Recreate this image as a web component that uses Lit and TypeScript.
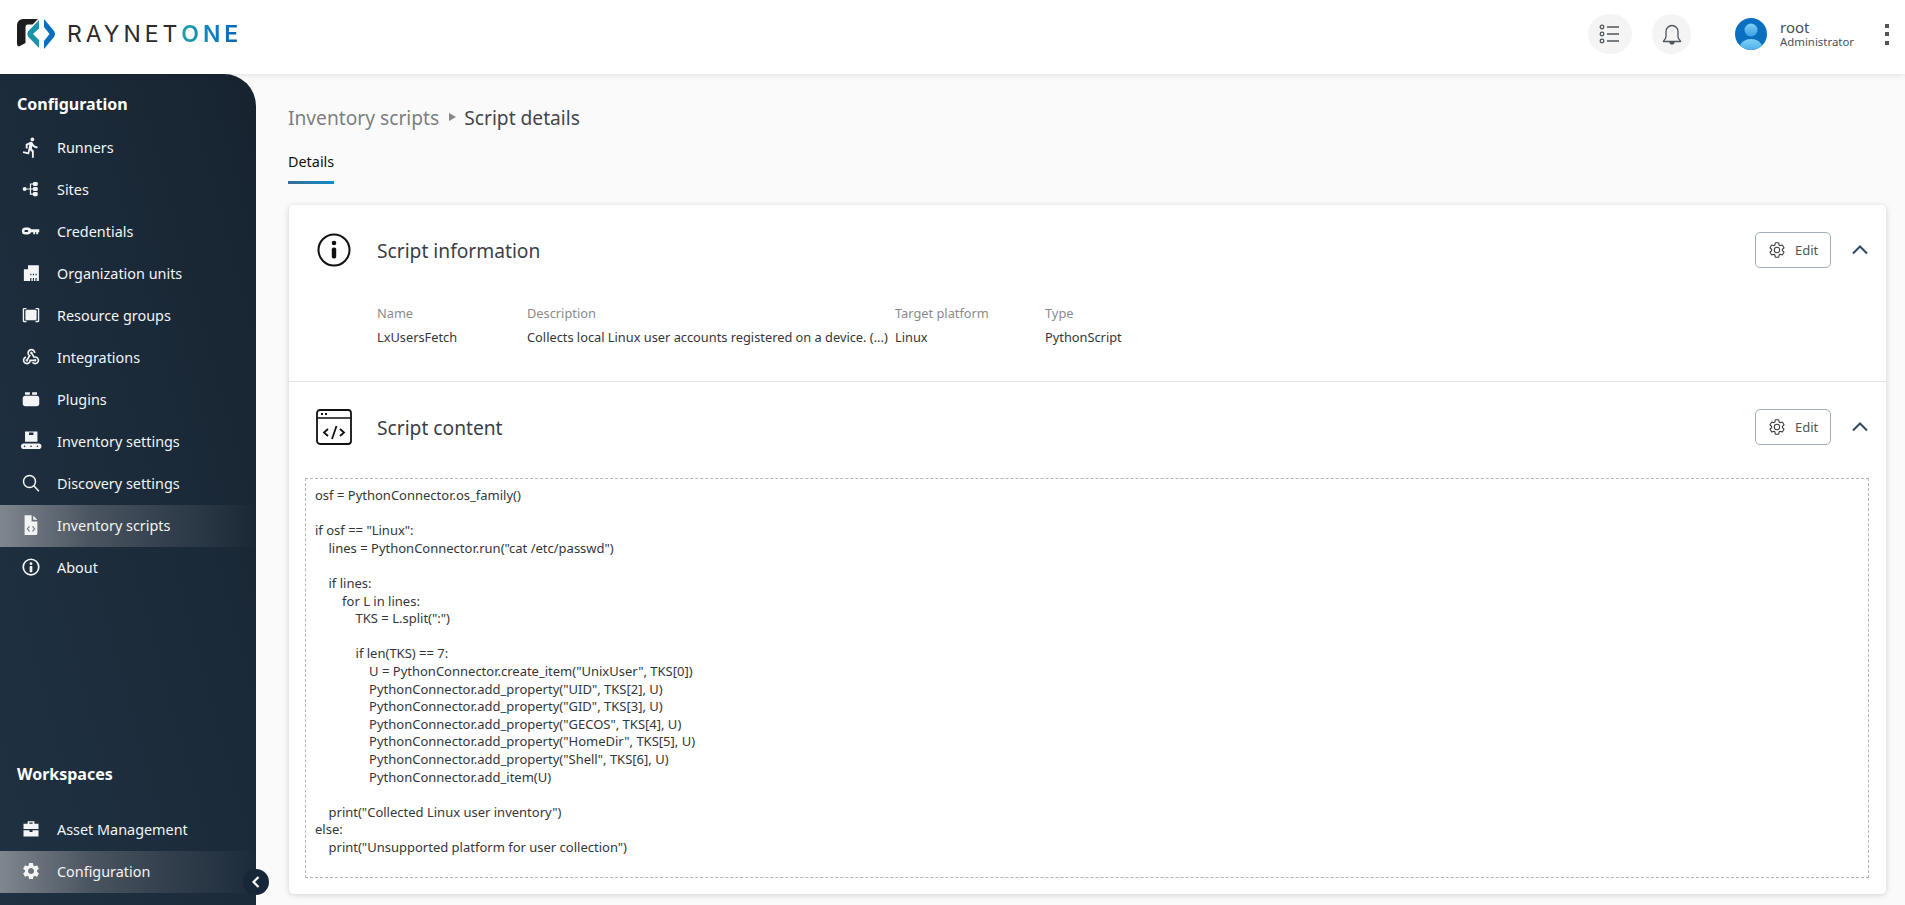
import { LitElement, css, html, svg } from "lit";
import { customElement } from "lit/decorators.js";

const gearPath =
  "M19.14 12.94c.04-.3.06-.61.06-.94 0-.32-.02-.64-.07-.94l2.03-1.58c.18-.14.23-.41.12-.61l-1.92-3.32c-.12-.22-.37-.29-.59-.22l-2.39.96c-.5-.38-1.03-.7-1.62-.94l-.36-2.54c-.04-.24-.24-.41-.48-.41h-3.84c-.24 0-.43.17-.47.41l-.36 2.54c-.59.24-1.13.57-1.62.94l-2.39-.96c-.22-.08-.47 0-.59.22L2.74 8.87c-.12.21-.08.47.12.61l2.03 1.58c-.05.3-.09.63-.09.94s.02.64.07.94l-2.03 1.58c-.18.14-.23.41-.12.61l1.92 3.32c.12.22.37.29.59.22l2.39-.96c.5.38 1.03.7 1.62.94l.36 2.54c.05.24.24.41.48.41h3.84c.24 0 .44-.17.47-.41l.36-2.54c.59-.24 1.13-.56 1.62-.94l2.39.96c.22.08.47 0 .59-.22l1.92-3.32c.12-.22.07-.47-.12-.61l-2.01-1.58zM12 15.6c-1.98 0-3.6-1.62-3.6-3.6s1.62-3.6 3.6-3.6 3.6 1.62 3.6 3.6-1.62 3.6-3.6 3.6z";

const icons: Record<string, unknown> = {
  runner: svg`<path transform="translate(-3 -2.400) scale(1.250)" d="M13.49 5.48c1.1 0 2-.9 2-2s-.9-2-2-2-2 .9-2 2 .9 2 2 2zm-3.6 13.9l1-4.4 2.100 2v6h2v-7.500l-2.100-2 .6-3c1.300 1.500 3.300 2.500 5.500 2.500v-2c-1.900 0-3.500-1-4.300-2.400l-1-1.600c-.4-.6-1-1-1.700-1-.3 0-.5.100-.8.100L6.400 8.300V13h2V9.600l1.800-.7-1.600 8.100-4.900-1-.4 2 7 1.400z"/>`,
  sites: svg`<circle cx="3.500" cy="12" r="2.600"/><path d="M5 11.200h5.500V4.500H15v1.600h-2.900v5.100H15v1.600h-2.900v5.100H15v1.600h-4.500v-6.700H5z"/><rect x="14.500" y="2.500" width="6.500" height="5.500" rx="1.800"/><rect x="14.500" y="9.300" width="6.500" height="5.500" rx="1.800"/><rect x="14.500" y="16.100" width="6.500" height="5.500" rx="1.800"/>`,
  key: svg`<path fill-rule="evenodd" d="M4.500 7.300h3.500a4.700 4.700 0 0 1 4.300 2.200H23v4.300h-1.500v2.500h-2.500v-2.500h-1.500v2.500H15v-2.500h-2.700a4.700 4.700 0 0 1-4.300 2.900H4.500a4.700 4.700 0 0 1 0-9.400zm0 3.400a1.300 1.300 0 0 0 0 2.600h2.500a1.300 1.300 0 0 0 0-2.600z"/>`,
  org: svg`<path fill-rule="evenodd" d="M8 1.500h14.500v21h-3v-4H18v4h-2v-4h-1.500v4h-2v-4H11v4H2.500V7H8zM11 13v2h1.500v-2zm3.500 0v2H16v-2zm3.500 0v2h1.500v-2z"/>`,
  group: svg`<path d="M6 2.500H2.500A1.500 1.500 0 0 0 1 4v16a1.500 1.500 0 0 0 1.500 1.500H6v-1.700H2.800V4.200H6zM18 2.500h3.500A1.500 1.500 0 0 1 23 4v16a1.500 1.500 0 0 1-1.500 1.500H18v-1.700h3.200V4.200H18z"/><rect x="4.500" y="5" width="15" height="14" rx="2"/>`,
  hook: svg`<path transform="translate(-1.200 -1.200) scale(1.100)" d="M10 15h5.880c.27-.31.67-.5 1.120-.5.830 0 1.500.670 1.500 1.500s-.670 1.500-1.500 1.500c-.440 0-.840-.190-1.120-.500H11.900c-.460 2.280-2.480 4-4.900 4-2.760 0-5-2.240-5-5 0-2.420 1.720-4.440 4-4.900v2.060C4.840 13.570 4 14.680 4 16c0 1.650 1.350 3 3 3s3-1.350 3-3v-1zm2.500-11c1.650 0 3 1.350 3 3h2c0-2.760-2.240-5-5-5s-5 2.240-5 5c0 1.430.6 2.710 1.560 3.620l-2.350 3.910C6.030 14.670 5.500 15.270 5.500 16c0 .830.670 1.500 1.500 1.500s1.500-.670 1.500-1.500c0-.160-.020-.310-.070-.450l3.380-5.630C10.420 9.660 9.500 8.430 9.500 7c0-1.650 1.350-3 3-3zm4.500 9c-.640 0-1.230.190-1.730.520l-3.050-5.070C11.530 8.310 11 7.710 11 7c0-.830.670-1.500 1.500-1.500S14 6.170 14 7c0 .150-.020.290-.060.430l2.190 3.640c.280-.050.570-.070.870-.070 2.760 0 5 2.240 5 5s-2.240 5-5 5c-1.850 0-3.470-1.010-4.330-2.500h2.670c.480.310 1.050.500 1.660.500 1.650 0 3-1.350 3-3s-1.350-3-3-3z"/>`,
  plugin: svg`<path d="M4 3h6.500v3.200H4zM13.500 3H20v3.200h-6.500z"/><rect x="1" y="7.500" width="22" height="14" rx="3.500"/>`,
  belt: svg`<path transform="translate(-.800 -.800) scale(1.070)" fill-rule="evenodd" d="M4.500 0h15.500v13H4.500zM9.500 1.500v3h5.500v-3zM3 15h18.500a3.200 3.200 0 0 1 0 7H3a3.200 3.200 0 0 1 0-7zM4 17.600a1 1 0 1 0 0 2 1 1 0 0 0 0-2zm8 0a1 1 0 1 0 0 2 1 1 0 0 0 0-2zm8 0a1 1 0 1 0 0 2 1 1 0 0 0 0-2z"/>`,
  search: svg`<g fill="none" stroke="currentColor" stroke-width="2"><circle cx="10" cy="10" r="8"/><path d="M15.800 15.800L22.500 23"/></g>`,
  filecode: svg`<path transform="translate(-1.500 -1) scale(1.100)" fill-rule="evenodd" d="M4.500 0h8.500v7.500h7V22a2 2 0 0 1-2 2H4.500zM15 .5L20 5.500h-5zM10 13l-3 3.500 3 3.500 1-.8-2.300-2.700 2.300-2.700zM14.500 13l3 3.500-3 3.500-1-.8 2.300-2.700-2.300-2.700z"/>`,
  info: svg`<path fill-rule="evenodd" d="M12 0.500a11.500 11.500 0 1 1 0 23 11.500 11.500 0 0 1 0-23zm0 2.300a9.200 9.200 0 1 0 0 18.400 9.200 9.200 0 0 0 0-18.400z"/><circle cx="12" cy="7.500" r="1.900"/><rect x="10.200" y="10.500" width="3.600" height="8.500" rx="1"/>`,
  case: svg`<path fill-rule="evenodd" d="M7.500 1.500h9v3.500H22v7H2V5h5.500zM9.800 3.300V5h4.400V3.300zM2 13.500h8V16h4v-2.500h8V22H2z"/>`,
  gear: svg`<path transform="translate(-1.400 -1.400) scale(1.120)" d="${gearPath}"/>`,
};

const configItems = [
  ["runner", "Runners"],
  ["sites", "Sites"],
  ["key", "Credentials"],
  ["org", "Organization units"],
  ["group", "Resource groups"],
  ["hook", "Integrations"],
  ["plugin", "Plugins"],
  ["belt", "Inventory settings"],
  ["search", "Discovery settings"],
  ["filecode", "Inventory scripts"],
  ["info", "About"],
];

const scriptText = `osf = PythonConnector.os_family()

if osf == "Linux":
    lines = PythonConnector.run("cat /etc/passwd")

    if lines:
        for L in lines:
            TKS = L.split(":")

            if len(TKS) == 7:
                U = PythonConnector.create_item("UnixUser", TKS[0])
                PythonConnector.add_property("UID", TKS[2], U)
                PythonConnector.add_property("GID", TKS[3], U)
                PythonConnector.add_property("GECOS", TKS[4], U)
                PythonConnector.add_property("HomeDir", TKS[5], U)
                PythonConnector.add_property("Shell", TKS[6], U)
                PythonConnector.add_item(U)

    print("Collected Linux user inventory")
else:
    print("Unsupported platform for user collection")`;

@customElement("app-root")
export class AppRoot extends LitElement {
  static styles = css`
    :host {
      display: flex;
      flex-direction: column;
      height: 905px;
      overflow: hidden;
      background: #fafafa;
      font-family: "Noto Sans", sans-serif;
      color: #32363b;
    }

    /* top bar */
    .topbar {
      flex: none;
      height: 74px;
      box-sizing: border-box;
      padding-bottom: 6px;
      background: #fff;
      display: flex;
      align-items: center;
      box-shadow: 0 1px 6px rgba(0, 0, 0, 0.1);
      position: relative;
      z-index: 2;
    }
    .logo {
      display: flex;
      align-items: center;
      margin-left: 17px;
    }
    .logo svg {
      width: 39px;
      height: 30px;
    }
    .logo-text {
      margin-left: 11px;
      font-family: "Inter", sans-serif;
      font-size: 23px;
      line-height: 30px;
      letter-spacing: 3.950px;
      color: #2b2b2b;
      white-space: nowrap;
    }
    .logo-text b {
      font-weight: 600;
      background: linear-gradient(90deg, #1f9fa8 0%, #0a7cc4 60%, #0c5ea8 100%);
      -webkit-background-clip: text;
      background-clip: text;
      color: transparent;
    }
    .top-actions {
      margin-left: auto;
      display: flex;
      align-items: center;
    }
    .round {
      width: 44px;
      height: 40px;
      border-radius: 50%;
      background: #f4f4f4;
      display: flex;
      align-items: center;
      justify-content: center;
      margin-right: 20px;
      color: #50555a;
    }
    .round.bell {
      width: 39px;
      margin-right: 44px;
    }
    .round svg {
      width: 24px;
      height: 24px;
      fill: none;
      stroke: currentColor;
    }
    .avatar {
      width: 32px;
      height: 32px;
    }
    .user {
      margin-left: 13px;
      display: flex;
      flex-direction: column;
      color: #4a5058;
      width: 105px;
    }
    .user .name {
      font-size: 15px;
      line-height: 15px;
      padding-top: 1px;
    }
    .user .role {
      font-size: 11.400px;
      line-height: 14px;
    }
    .dots {
      width: 5px;
      margin-right: 15px;
      display: flex;
      flex-direction: column;
      gap: 4.500px;
    }
    .dots i {
      display: block;
      width: 4px;
      height: 4px;
      background: #50555f;
    }

    /* shell */
    .shell {
      flex: 1;
      display: flex;
      min-height: 0;
    }
    .sidebar {
      flex: none;
      width: 256px;
      position: relative;
      box-sizing: border-box;
      padding-top: 19px;
      display: flex;
      flex-direction: column;
      background: linear-gradient(75deg, #1f3142 0%, #1b2a39 60%, #17232f 100%);
      border-top-right-radius: 32px;
      color: #fff;
    }
    .heading {
      font-size: 16px;
      font-weight: 700;
      line-height: 22px;
      padding-left: 17px;
      margin-bottom: 12px;
    }
    .heading.bottom {
      margin-top: auto;
      margin-bottom: 24px;
    }
    .item {
      height: 42px;
      box-sizing: border-box;
      padding-bottom: 2px;
      display: flex;
      align-items: center;
      font-size: 14.400px;
      color: #f2f4f5;
    }
    .item.active {
      background: linear-gradient(90deg, #7f878e 0%, #4b5561 35%, #333f4d 65%, rgba(40, 52, 65, 0) 100%);
    }
    .item svg {
      width: 18px;
      height: 18px;
      margin-left: 22px;
      margin-right: 17px;
      fill: currentColor;
      flex: none;
      overflow: visible;
    }
    .side-bottom {
      margin-bottom: 12px;
    }
    .collapse {
      position: absolute;
      right: -13px;
      bottom: 10px;
      width: 26px;
      height: 26px;
      border-radius: 50%;
      background: #16273a;
      display: flex;
      align-items: center;
      justify-content: center;
    }
    .collapse svg {
      width: 14px;
      height: 14px;
      fill: none;
      stroke: #fff;
      stroke-width: 2.200;
    }

    /* main */
    .main {
      flex: 1;
      min-width: 0;
      padding: 0 19px 0 32px;
      display: flex;
      flex-direction: column;
    }
    .crumbs {
      margin-top: 28px;
      height: 30px;
      display: flex;
      align-items: center;
      font-size: 19.200px;
      color: #7d7f82;
    }
    .crumbs .sep {
      width: 0;
      height: 0;
      margin: 0 8px 0 10px;
      border-left: 7px solid #85878a;
      border-top: 4px solid transparent;
      border-bottom: 4px solid transparent;
    }
    .crumbs .current {
      color: #43474c;
    }
    .tabs {
      margin-top: 20px;
      display: flex;
    }
    .tab {
      font-size: 14.400px;
      line-height: 19px;
      color: #111;
      padding-bottom: 10px;
      border-bottom: 3px solid;
      border-image: linear-gradient(90deg, #3a6a96, #0c8fc6) 1;
    }
    .card {
      margin: 21px 0 0 1px;
      height: 689px;
      flex: none;
      background: #fff;
      border-radius: 5px;
      box-shadow: 0 1px 6px rgba(0, 0, 0, 0.16);
    }
    .section + .section {
      border-top: 1px solid #e3e5e6;
    }
    .section-info {
      height: 176px;
    }
    .section-head {
      height: 90px;
      display: flex;
      align-items: center;
      padding-right: 18px;
    }
    .head-icon {
      width: 36px;
      height: 36px;
      margin-left: 27px;
      margin-right: 25px;
      flex: none;
    }
    .section-head h2 {
      margin: 0;
      font-size: 19.200px;
      font-weight: 400;
      color: #3b4046;
    }
    .edit {
      margin-left: auto;
      width: 76px;
      height: 36px;
      box-sizing: border-box;
      border: 1px solid #9fb0b8;
      border-radius: 5px;
      background: #fff;
      display: flex;
      align-items: center;
      font-family: inherit;
      font-size: 13px;
      color: #50555a;
      padding: 0 0 0 12px;
    }
    .edit svg {
      width: 18px;
      height: 18px;
      margin-right: 9px;
      fill: none;
      stroke: #33383d;
      stroke-width: 1.400;
    }
    .chev {
      width: 16px;
      height: 10px;
      margin-left: 21px;
      fill: none;
      stroke: #2f4a66;
      stroke-width: 2;
    }
    .fields {
      display: grid;
      grid-template-columns: 150px 368px 150px 1fr;
      padding-left: 88px;
      margin-top: 9px;
      font-size: 12.800px;
      row-gap: 6px;
    }
    .fields .label {
      color: #888b8e;
      line-height: 18px;
    }
    .fields .value {
      color: #33373b;
      line-height: 18px;
    }
    .code {
      margin: 6px 17px 0 16px;
      height: 400px;
      box-sizing: border-box;
      border: 1px dashed #b4b7b9;
      padding: 8px 9px;
      font-size: 13px;
      line-height: 17.600px;
      color: #33373b;
      white-space: pre;
      overflow: hidden;
    }
  `;

  private renderItem(icon: string, label: string, active = false) {
    return html`<div class="item ${active ? "active" : ""}">
      <svg viewBox="0 0 24 24">${icons[icon]}</svg>${label}
    </div>`;
  }

  private renderEdit() {
    return html`<button class="edit">
        <svg viewBox="0 0 24 24"><path d=${gearPath} /></svg>
        Edit
      </button>
      <svg class="chev" viewBox="0 0 16 10"><path d="M1 8.500L8 1.500l7 7" /></svg>`;
  }

  render() {
    return html`
      <header class="topbar">
        <div class="logo">
          <svg viewBox="0 0 39 30">
            <path d="M0 6a6 6 0 0 1 6-6H21L15.500 5.500H11a2.500 2.500 0 0 0-2.500 2.500V24L2 27.500Q0 27 0 25z" fill="#1d1d1d"/>
            <path d="M22 1v8.500L16 15l6 6v8L11 17.500q-1.500-2.500 0-5z" fill="#1b93a8"/>
            <path d="M27 0l10 12q2 3 0 6L27 30v-8l5.500-7L27 8z" fill="#0a6fc0"/>
          </svg>
          <div class="logo-text">RAYNET<b>ONE</b></div>
        </div>
        <div class="top-actions">
          <div class="round">
            <svg viewBox="0 0 24 24" stroke-width="1.300">
              <circle cx="4" cy="5" r="1.800"/><circle cx="4" cy="12" r="1.800"/><circle cx="4" cy="19" r="1.800"/>
              <path d="M9 5h12M9 12h12M9 19h12"/>
            </svg>
          </div>
          <div class="round bell">
            <svg viewBox="0 0 24 24" stroke-width="1.300">
              <path d="M3.500 19.500c0-1.500 2.500-2 2.500-5V9.500a6 6 0 0 1 12 0v5c0 3 2.500 3.500 2.500 5z"/>
              <path d="M10 20.500a2 1.500 0 0 0 4 0z" fill="currentColor"/>
            </svg>
          </div>
          <svg class="avatar" viewBox="0 0 32 32">
            <defs>
              <clipPath id="av"><circle cx="16" cy="16" r="16"/></clipPath>
              <linearGradient id="avg" x1="0" y1="0" x2="0" y2="1">
                <stop offset="0" stop-color="#7fd0f5"/>
                <stop offset="1" stop-color="#3aa0e4"/>
              </linearGradient>
            </defs>
            <g clip-path="url(#av)">
              <rect width="32" height="32" fill="#0a6fc0"/>
              <circle cx="16" cy="12" r="6.500" fill="url(#avg)"/>
              <ellipse cx="16" cy="29" rx="11" ry="8" fill="url(#avg)"/>
            </g>
          </svg>
          <div class="user">
            <span class="name">root</span>
            <span class="role">Administrator</span>
          </div>
          <div class="dots"><i></i><i></i><i></i></div>
        </div>
      </header>
      <div class="shell">
        <aside class="sidebar">
          <div class="heading">Configuration</div>
          ${configItems.map(([i, l]) => this.renderItem(i, l, l === "Inventory scripts"))}
          <div class="heading bottom">Workspaces</div>
          <div class="side-bottom">
            ${this.renderItem("case", "Asset Management")}
            ${this.renderItem("gear", "Configuration", true)}
          </div>
          <div class="collapse">
            <svg viewBox="0 0 14 14"><path d="M9.500 2L4.500 7l5 5"/></svg>
          </div>
        </aside>
        <main class="main">
          <div class="crumbs">
            <span>Inventory scripts</span><span class="sep"></span><span class="current">Script details</span>
          </div>
          <div class="tabs"><div class="tab">Details</div></div>
          <div class="card">
            <section class="section section-info">
              <div class="section-head">
                <svg class="head-icon" viewBox="0 0 36 36">
                  <circle cx="18" cy="18" r="15.500" fill="none" stroke="#111" stroke-width="2"/>
                  <circle cx="18" cy="11" r="2.300" fill="#111"/>
                  <rect x="15.800" y="15.500" width="4.400" height="11" rx="1.800" fill="#111"/>
                </svg>
                <h2>Script information</h2>
                ${this.renderEdit()}
              </div>
              <div class="fields">
                <span class="label">Name</span>
                <span class="label">Description</span>
                <span class="label">Target platform</span>
                <span class="label">Type</span>
                <span class="value">LxUsersFetch</span>
                <span class="value">Collects local Linux user accounts registered on a device. (...)</span>
                <span class="value">Linux</span>
                <span class="value">PythonScript</span>
              </div>
            </section>
            <section class="section section-code">
              <div class="section-head">
                <svg class="head-icon" viewBox="0 0 36 36" fill="none" stroke="#111">
                  <rect x="1" y="1" width="34" height="34" rx="3" stroke-width="1.800"/>
                  <path d="M1 9h34" stroke-width="1.500"/>
                  <path d="M5 5h2M9 5h2" stroke-width="2"/>
                  <path d="M12 20l-4 3.500 4 3.500M24 20l4 3.500-4 3.500M20.500 17l-4.500 13" stroke-width="1.800"/>
                </svg>
                <h2>Script content</h2>
                ${this.renderEdit()}
              </div>
              <div class="code">${scriptText}</div>
            </section>
          </div>
        </main>
      </div>
    `;
  }
}
